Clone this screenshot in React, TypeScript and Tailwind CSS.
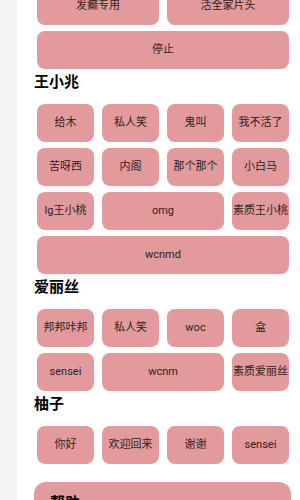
const font = { fontFamily: 'Roboto, "Noto Sans CJK SC", sans-serif' };

type Btn = { label: string; span?: number };

function Grid({ items }: { items: Btn[] }) {
  return (
    <div className="grid grid-cols-4 gap-x-[8px] gap-y-[6px] pl-[3px] pr-[2px]">
      {items.map((b, i) => (
        <button
          key={i}
          className={
            "h-[38px] rounded-lg bg-[#e39a9c] text-[11px] text-[#2e2222] whitespace-nowrap flex items-center justify-center " +
            (b.span === 4 ? "col-span-4" : b.span === 2 ? "col-span-2" : "")
          }
        >
          {b.label}
        </button>
      ))}
    </div>
  );
}

function Heading({ children }: { children: React.ReactNode }) {
  return <h3 className="mt-[3px] mb-[12px] h-[20px] leading-[20px] text-[15px] font-bold text-black">{children}</h3>;
}

export default function App() {
  return (
    <div className="flex w-[300px] h-[500px] overflow-hidden bg-white" style={font}>
      <div className="w-[17px] shrink-0 bg-[#f3f3f3]" />
      <div className="flex-1 pl-[17px] pr-[9px] mt-[-13px]">
        <Grid
          items={[
            { label: "发癫专用", span: 2 },
            { label: "活全家片头", span: 2 },
            { label: "停止", span: 4 },
          ]}
        />
        <Heading>王小兆</Heading>
        <Grid
          items={[
            { label: "给木" },
            { label: "私人笑" },
            { label: "鬼叫" },
            { label: "我不活了" },
            { label: "苦呀西" },
            { label: "内阁" },
            { label: "那个那个" },
            { label: "小白马" },
            { label: "lg王小桃" },
            { label: "omg", span: 2 },
            { label: "素质王小桃" },
            { label: "wcnmd", span: 4 },
          ]}
        />
        <Heading>爱丽丝</Heading>
        <Grid
          items={[
            { label: "邦邦咔邦" },
            { label: "私人笑" },
            { label: "woc" },
            { label: "盒" },
            { label: "sensei" },
            { label: "wcnm", span: 2 },
            { label: "素质爱丽丝" },
          ]}
        />
        <Heading>柚子</Heading>
        <Grid
          items={[
            { label: "你好" },
            { label: "欢迎回来" },
            { label: "谢谢" },
            { label: "sensei" },
          ]}
        />
        <div className="mt-[18px] rounded-xl bg-[#e39a9c] px-4 pt-[10px] pb-6">
          <div className="text-[15px] font-bold text-black">帮助</div>
        </div>
      </div>
    </div>
  );
}
